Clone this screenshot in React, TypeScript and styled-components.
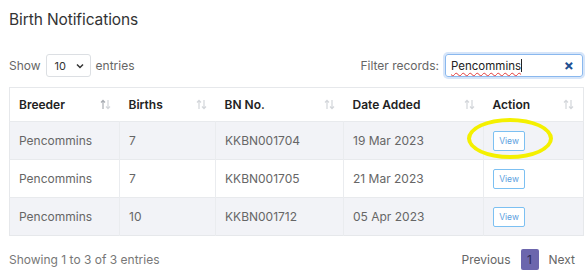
import React from 'react'
import styled, { createGlobalStyle } from 'styled-components'

interface Row {
    breeder: string
    births: number
    bn: string
    date: string
}

const rows: Row[] = [
    { breeder: 'Pencommins', births: 7, bn: 'KKBN001704', date: '19 Mar 2023' },
    { breeder: 'Pencommins', births: 7, bn: 'KKBN001705', date: '21 Mar 2023' },
    { breeder: 'Pencommins', births: 10, bn: 'KKBN001712', date: '05 Apr 2023' },
]

const columns = [
    { title: 'Breeder', width: 110, active: true },
    { title: 'Births', width: 96 },
    { title: 'BN No.', width: 128 },
    { title: 'Date Added', width: 140 },
    { title: 'Action', width: 100 },
]

const SortIcon: React.FC<{ active?: boolean }> = ({ active }) => (
    <SortSvg width="11" height="11" viewBox="0 0 11 11">
        <g fill="none" strokeWidth="1.2">
            <path d="M3 10V1.5M1 3.5L3 1.3L5 3.5" stroke={active ? '#a9adb3' : '#d3d6da'} />
            <path d="M8 1v8.5M6 7.5L8 9.7L10 7.5" stroke="#d3d6da" />
        </g>
    </SortSvg>
)

export default function App() {
    return (
        <>
            <GlobalStyle />
            <Page>
                <Title>Birth Notifications</Title>
                <Controls>
                    <Length>
                        Show
                        <Select>
                            <span>10</span>
                            <svg width="8" height="6" viewBox="0 0 8 6">
                                <path d="M1 1.5L4 4.5L7 1.5" fill="none" stroke="#333" strokeWidth="1.5" />
                            </svg>
                        </Select>
                        entries
                    </Length>
                    <Filter>
                        Filter records:
                        <SearchBox>
                            <Typed>Pencommins</Typed>
                            <Caret />
                            <Clear>×</Clear>
                        </SearchBox>
                    </Filter>
                </Controls>
                <Table>
                    <colgroup>
                        {columns.map(c => (
                            <col key={c.title} style={{ width: c.width }} />
                        ))}
                    </colgroup>
                    <thead>
                        <tr>
                            {columns.map(c => (
                                <Th key={c.title}>
                                    <HeadInner>
                                        {c.title}
                                        <SortIcon active={c.active} />
                                    </HeadInner>
                                </Th>
                            ))}
                        </tr>
                    </thead>
                    <tbody>
                        {rows.map((r, i) => (
                            <Tr key={r.bn} $striped={i % 2 === 0}>
                                <Td>{r.breeder}</Td>
                                <Td>{r.births}</Td>
                                <Td>{r.bn}</Td>
                                <Td>{r.date}</Td>
                                <Td>
                                    <ActionWrap>
                                        <ViewButton>View</ViewButton>
                                        {i === 0 && <Highlight />}
                                    </ActionWrap>
                                </Td>
                            </Tr>
                        ))}
                    </tbody>
                </Table>
                <Footer>
                    <Info>Showing 1 to 3 of 3 entries</Info>
                    <Pager>
                        <PageLink>Previous</PageLink>
                        <PageCurrent>1</PageCurrent>
                        <PageLink>Next</PageLink>
                    </Pager>
                </Footer>
            </Page>
        </>
    )
}

const GlobalStyle = createGlobalStyle`
    body {
        margin: 0;
        background: #fff;
        font-family: Inter, "Noto Sans", sans-serif;
    }
`

const Page = styled.div`
    width: 588px;
    height: 273px;
    box-sizing: border-box;
    padding: 10px 5px 0 9px;
    color: #555;
    font-size: 12px;
    overflow: hidden;
`

const Title = styled.h1`
    margin: 0;
    font-size: 15.5px;
    line-height: 20px;
    font-weight: 400;
    color: #333;
    letter-spacing: -0.1px;
`

const Controls = styled.div`
    display: flex;
    align-items: center;
    justify-content: space-between;
    margin-top: 24px;
    height: 23px;
`

const Length = styled.div`
    display: flex;
    align-items: center;
    gap: 5px;
    color: #666;
`

const Select = styled.div`
    width: 45px;
    height: 23px;
    box-sizing: border-box;
    border: 1px solid #dcdfe3;
    border-radius: 3px;
    display: flex;
    align-items: center;
    justify-content: space-between;
    padding: 0 6px 0 8px;
    color: #333;
    font-size: 11px;
`

const Filter = styled.div`
    display: flex;
    align-items: center;
    gap: 6px;
    color: #666;
`

const SearchBox = styled.div`
    width: 138px;
    height: 23px;
    box-sizing: border-box;
    border: 1px solid #8ab8ee;
    border-radius: 3px;
    box-shadow: 0 0 0 2px rgba(120, 170, 235, 0.3);
    display: flex;
    align-items: center;
    padding: 0 8px 0 5px;
    color: #222;
    font-size: 11.5px;
`

const Typed = styled.span`
    text-decoration: underline wavy #e23b3b;
    text-decoration-thickness: 1px;
    text-underline-offset: 2px;
`

const Caret = styled.span`
    width: 1px;
    height: 13px;
    background: #222;
`

const Clear = styled.span`
    margin-left: auto;
    color: #1e4f91;
    font-weight: 700;
    font-size: 15px;
    line-height: 1;
`

const Table = styled.table`
    margin-top: 10px;
    width: 574px;
    border-collapse: collapse;
    table-layout: fixed;
    border: 1px solid #e6e8eb;
`

const Th = styled.th`
    height: 33px;
    padding: 0 9px;
    text-align: left;
    font-weight: 600;
    color: #222;
    font-size: 12px;
`

const HeadInner = styled.div`
    display: flex;
    align-items: center;
    justify-content: space-between;
`

const SortSvg = styled.svg`
    flex-shrink: 0;
`

const Tr = styled.tr<{ $striped: boolean }>`
    background: ${({ $striped }) => ($striped ? '#f2f3f7' : '#fff')};
    border-top: 1px solid #e8eaed;
`

const Td = styled.td`
    height: 37px;
    padding: 0 9px;
    color: #666;
    border-left: 1px solid #eaecef;
    &:first-child {
        border-left: none;
    }
`

const ActionWrap = styled.div`
    position: relative;
    display: inline-block;
`

const ViewButton = styled.button`
    width: 32px;
    height: 20px;
    padding: 0;
    background: #fff;
    border: 1px solid #7cc0f2;
    border-radius: 2px;
    color: #5a9ee0;
    font-family: Inter, "Noto Sans", sans-serif;
    font-size: 8.5px;
`

const Highlight = styled.span`
    position: absolute;
    left: -26px;
    top: -13px;
    width: 86px;
    height: 41px;
    box-sizing: border-box;
    border: 4px solid #f4f000;
    border-radius: 50%;
    pointer-events: none;
`

const Footer = styled.div`
    display: flex;
    align-items: center;
    justify-content: space-between;
    margin-top: 13px;
    padding-right: 8px;
`

const Info = styled.div`
    color: #777;
`

const Pager = styled.div`
    display: flex;
    align-items: center;
    gap: 10px;
`

const PageLink = styled.span`
    color: #666;
`

const PageCurrent = styled.span`
    width: 18px;
    height: 21px;
    border-radius: 2px;
    background: #6c66ad;
    color: #2d2a55;
    display: flex;
    align-items: center;
    justify-content: center;
`
